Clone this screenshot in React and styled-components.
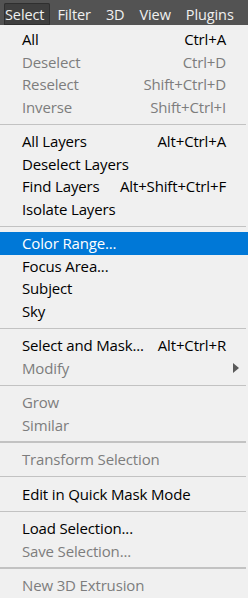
import React from 'react';
import styled, { createGlobalStyle } from 'styled-components';

const GlobalStyle = createGlobalStyle`
  body {
    margin: 0;
    background: #f0f0f0;
    font-family: "Open Sans", "Noto Sans", sans-serif;
  }
`;

// STYLED COMPONENTS
const Window = styled.div`
  width: 248px;
  height: 598px;
  overflow: hidden;
  background: #f0f0f0;
`;

const MenuBar = styled.div`
  display: flex;
  align-items: stretch;
  height: 25px;
  padding: 3px 0 0 4px;
  box-sizing: border-box;
  background: #535353;
`;

const BarItem = styled.div`
  display: flex;
  align-items: center;
  padding: ${(props) => (props.active ? '0 6px 0 1px' : '0 7px')};
  margin-right: ${(props) => (props.active ? '0' : '1px')};
  font-size: 14.5px;
  letter-spacing: -0.1px;
  color: #f0f0f0;
  background: ${(props) => (props.active ? '#3f3f3f' : 'transparent')};
  box-shadow: ${(props) => (props.active ? 'inset 0 0 0 1px #2f2f2f' : 'none')};
  border-radius: 2px 2px 0 0;
`;

const Menu = styled.div`
  padding-top: 3px;
`;

const Item = styled.div`
  display: grid;
  grid-template-columns: 22px 1fr auto 22px;
  align-items: center;
  height: 22.5px;
  font-size: 15px;
  letter-spacing: -0.15px;
  white-space: nowrap;
  color: ${(props) => (props.disabled ? '#7d7d7d' : '#000')};
  background: ${(props) => (props.selected ? '#0078d7' : 'transparent')};
  ${(props) => props.selected && 'color: #fff;'}
`;

const Label = styled.span`
  grid-column: 2;
`;

const Shortcut = styled.span`
  grid-column: 3;
  text-align: right;
`;

const Arrow = styled.span`
  grid-column: 4;
  margin-left: 7px;
  width: 0;
  height: 0;
  border-left: 6px solid #5a5a5a;
  border-top: 5px solid transparent;
  border-bottom: 5px solid transparent;
`;

const Separator = styled.div`
  height: ${(props) => (props.thick ? 2 : 1)}px;
  margin: ${(props) => (props.thick ? '5px 2px 5px 0' : '5.5px 2px 5.5px 0')};
  background: #c2c2c2;
`;

const barItems = ['Select', 'Filter', '3D', 'View', 'Plugins'];

// menu groups, each separated by a rule
const groups = [
  {
    items: [
      { label: 'All', shortcut: 'Ctrl+A' },
      { label: 'Deselect', shortcut: 'Ctrl+D', disabled: true },
      { label: 'Reselect', shortcut: 'Shift+Ctrl+D', disabled: true },
      { label: 'Inverse', shortcut: 'Shift+Ctrl+I', disabled: true },
    ],
  },
  {
    items: [
      { label: 'All Layers', shortcut: 'Alt+Ctrl+A' },
      { label: 'Deselect Layers' },
      { label: 'Find Layers', shortcut: 'Alt+Shift+Ctrl+F' },
      { label: 'Isolate Layers' },
    ],
  },
  {
    items: [
      { label: 'Color Range...', selected: true },
      { label: 'Focus Area...' },
      { label: 'Subject' },
      { label: 'Sky' },
    ],
  },
  {
    items: [
      { label: 'Select and Mask...', shortcut: 'Alt+Ctrl+R' },
      { label: 'Modify', disabled: true, submenu: true },
    ],
  },
  {
    thick: true,
    items: [
      { label: 'Grow', disabled: true },
      { label: 'Similar', disabled: true },
    ],
  },
  { items: [{ label: 'Transform Selection', disabled: true }] },
  { items: [{ label: 'Edit in Quick Mask Mode' }] },
  {
    thick: true,
    items: [
      { label: 'Load Selection...' },
      { label: 'Save Selection...', disabled: true },
    ],
  },
  { items: [{ label: 'New 3D Extrusion', disabled: true }] },
];

const App = () => (
  <Window>
    <GlobalStyle />
    <MenuBar>
      {barItems.map((name, index) => (
        <BarItem key={name} active={index === 0}>
          {name}
        </BarItem>
      ))}
    </MenuBar>
    <Menu>
      {groups.map((group, gi) => (
        <React.Fragment key={gi}>
          {gi > 0 && <Separator thick={groups[gi - 1].thick} />}
          {group.items.map((item) => (
            <Item key={item.label} disabled={item.disabled} selected={item.selected}>
              <Label>{item.label}</Label>
              {item.shortcut && <Shortcut>{item.shortcut}</Shortcut>}
              {item.submenu && <Arrow />}
            </Item>
          ))}
        </React.Fragment>
      ))}
    </Menu>
  </Window>
);

export default App;
